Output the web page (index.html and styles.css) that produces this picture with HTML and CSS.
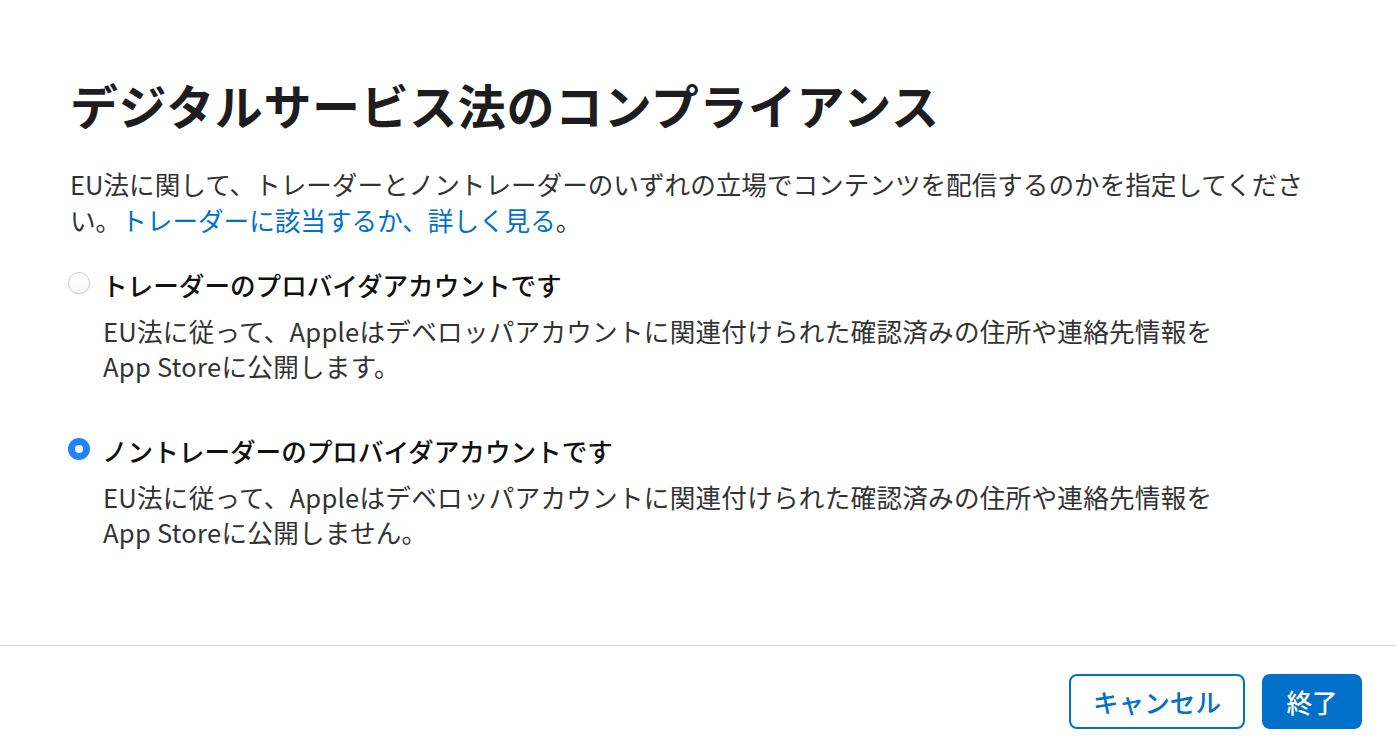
FILE: index.html
```html
<!DOCTYPE html>
<html lang="ja">
<head>
<meta charset="utf-8">
<title>デジタルサービス法のコンプライアンス</title>
<link rel="stylesheet" href="styles.css">
</head>
<body>
<div class="dialog">
  <main class="content">
    <h1 class="title">デジタルサービス法のコンプライアンス</h1>
    <p class="intro">EU法に関して、トレーダーとノントレーダーのいずれの立場でコンテンツを配信するのかを指定してください。<a class="link" href="#">トレーダーに該当するか、詳しく見る</a>。</p>
    <div class="options">
      <label class="option">
        <span class="option-head">
          <span class="radio"></span>
          <span class="option-label">トレーダーのプロバイダアカウントです</span>
        </span>
        <span class="option-desc">EU法に従って、Appleはデベロッパアカウントに関連付けられた確認済みの住所や連絡先情報を<br>App Storeに公開します。</span>
      </label>
      <label class="option">
        <span class="option-head">
          <span class="radio radio-checked"></span>
          <span class="option-label">ノントレーダーのプロバイダアカウントです</span>
        </span>
        <span class="option-desc">EU法に従って、Appleはデベロッパアカウントに関連付けられた確認済みの住所や連絡先情報を<br>App Storeに公開しません。</span>
      </label>
    </div>
  </main>
  <footer class="footer">
    <button class="btn btn-secondary" type="button">キャンセル</button>
    <button class="btn btn-primary" type="button">終了</button>
  </footer>
</div>
</body>
</html>
```
FILE: styles.css
```css
html, body {
  margin: 0;
  padding: 0;
  background: #ffffff;
}
body {
  font-family: "Noto Sans CJK JP", "Noto Sans", "Liberation Sans", sans-serif;
  color: #333333;
}
.dialog {
  display: flex;
  flex-direction: column;
  height: 100vh;
  box-sizing: border-box;
}
.content {
  padding: 0 70px;
  flex: 1;
}
.title {
  margin: 75px 0 0;
  font-size: 48px;
  line-height: 58px;
  font-weight: 700;
  color: #1d1d1f;
  letter-spacing: 0.6px;
}
.intro {
  margin: 33px 0 0;
  font-size: 25.6px;
  line-height: 36px;
  color: #333333;
  max-width: 1250px;
}
.link {
  color: #0070c9;
  text-decoration: none;
}
.options {
  margin-top: 29px;
  display: flex;
  flex-direction: column;
  gap: 50px;
}
.option {
  display: flex;
  flex-direction: column;
  gap: 10px;
}
.option-head {
  display: flex;
  align-items: center;
  gap: 12px;
  margin-left: -2px;
}
.radio {
  width: 22px;
  height: 22px;
  box-sizing: border-box;
  border-radius: 50%;
  border: 1px solid #cfcfcf;
  background: linear-gradient(#ffffff, #f7f7f7);
  box-shadow: 0 0.5px 1px rgba(0, 0, 0, 0.12);
  flex: none;
  display: flex;
  align-items: center;
  justify-content: center;
  margin-top: -5px;
}
.radio-checked {
  border: none;
  background: #1f84fb;
  box-shadow: none;
}
.radio-checked::after {
  content: "";
  width: 8px;
  height: 8px;
  border-radius: 50%;
  background: #ffffff;
}
.option-label {
  font-size: 25.6px;
  line-height: 36px;
  font-weight: 500;
  color: #111111;
}
.option-desc {
  padding-left: 33px;
  font-size: 25.6px;
  line-height: 35px;
  color: #333333;
  letter-spacing: 0.25px;
}
.footer {
  border-top: 1.5px solid #d5d5d5;
  display: flex;
  justify-content: flex-end;
  gap: 17px;
  padding: 28px 34px 23px;
}
.btn {
  height: 55px;
  box-sizing: border-box;
  border: 2px solid #0070c9;
  border-radius: 8px;
  padding: 0 22px;
  font-family: "Noto Sans CJK JP", "Noto Sans", sans-serif;
  font-size: 25.6px;
  font-weight: 500;
  line-height: 1;
  cursor: pointer;
}
.btn-secondary {
  background: #ffffff;
  color: #0070c9;
  width: 176px;
}
.btn-primary {
  background: #0070c9;
  color: #ffffff;
  width: 100px;
}
```
